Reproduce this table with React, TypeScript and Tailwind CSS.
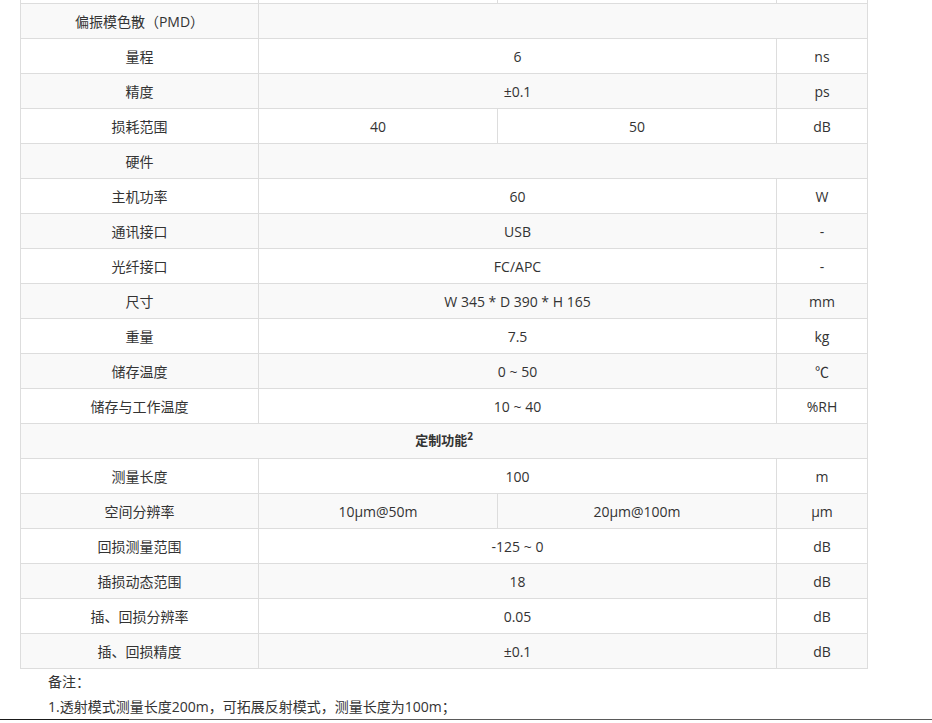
type Row = {
  label: React.ReactNode;
  cells: string[]; // 0 = empty, spans rest; 1 = spans both middle columns; 2 = split
  unit?: string;
  full?: boolean;
};

const rows: Row[] = [
  { label: "偏振模色散（PMD）", cells: [] },
  { label: "量程", cells: ["6"], unit: "ns" },
  { label: "精度", cells: ["±0.1"], unit: "ps" },
  { label: "损耗范围", cells: ["40", "50"], unit: "dB" },
  { label: "硬件", cells: [] },
  { label: "主机功率", cells: ["60"], unit: "W" },
  { label: "通讯接口", cells: ["USB"], unit: "-" },
  { label: "光纤接口", cells: ["FC/APC"], unit: "-" },
  { label: "尺寸", cells: ["W 345 * D 390 * H 165"], unit: "mm" },
  { label: "重量", cells: ["7.5"], unit: "kg" },
  { label: "储存温度", cells: ["0 ~ 50"], unit: "℃" },
  { label: "储存与工作温度", cells: ["10 ~ 40"], unit: "%RH" },
  {
    label: (
      <>
        定制功能<sup className="text-[10px] font-bold">2</sup>
      </>
    ),
    cells: [],
    full: true,
  },
  { label: "测量长度", cells: ["100"], unit: "m" },
  { label: "空间分辨率", cells: ["10μm@50m", "20μm@100m"], unit: "μm" },
  { label: "回损测量范围", cells: ["-125 ~ 0"], unit: "dB" },
  { label: "插损动态范围", cells: ["18"], unit: "dB" },
  { label: "插、回损分辨率", cells: ["0.05"], unit: "dB" },
  { label: "插、回损精度", cells: ["±0.1"], unit: "dB" },
];

const td = "border border-[#dddddd] p-0 pt-px text-center align-middle";

const App = () => {
  return (
    <div
      className="w-[932px] h-[723px] overflow-hidden bg-white text-[14px] text-[#333333]"
      style={{ fontFamily: '"Open Sans", "Noto Sans CJK SC", sans-serif' }}
    >
      <div className="pl-5">
        <table className="w-[847px] table-fixed border-collapse">
          <colgroup>
            <col className="w-[238px]" />
            <col className="w-[239px]" />
            <col className="w-[279px]" />
            <col className="w-[91px]" />
          </colgroup>
          <tbody>
            {/* tail of the row above, cut off by the scroll */}
            <tr className="h-[3px]">
              <td className="border border-t-0 border-[#dddddd] p-0" />
              <td className="border border-t-0 border-[#dddddd] p-0" />
              <td className="border border-t-0 border-[#dddddd] p-0" />
              <td className="border border-t-0 border-[#dddddd] p-0" />
            </tr>
            {rows.map((r, i) => (
              <tr key={i} className={`h-[35px] ${i % 2 === 0 ? "bg-[#f9f9f9]" : "bg-white"}`}>
                {r.full ? (
                  <td colSpan={4} className={`${td} font-bold text-[13px]`}>
                    {r.label}
                  </td>
                ) : (
                  <>
                    <td className={td}>{r.label}</td>
                    {r.cells.length === 0 && <td colSpan={3} className={td} />}
                    {r.cells.length === 1 && (
                      <td colSpan={2} className={td}>
                        {r.cells[0]}
                      </td>
                    )}
                    {r.cells.length === 2 && (
                      <>
                        <td className={td}>{r.cells[0]}</td>
                        <td className={td}>{r.cells[1]}</td>
                      </>
                    )}
                    {r.cells.length > 0 && <td className={td}>{r.unit}</td>}
                  </>
                )}
              </tr>
            ))}
          </tbody>
        </table>
      </div>

      {/* notes */}
      <div className="pl-12 leading-[25px]">
        <p>备注：</p>
        <p>1.透射模式测量长度200m，可拓展反射模式，测量长度为100m；</p>
      </div>

      <div className="flex h-px">
        <div className="w-[129px] bg-[#1a1a1a]" />
        <div className="flex-1 bg-[#5a5a5a]" />
      </div>
    </div>
  );
};

export default App;
